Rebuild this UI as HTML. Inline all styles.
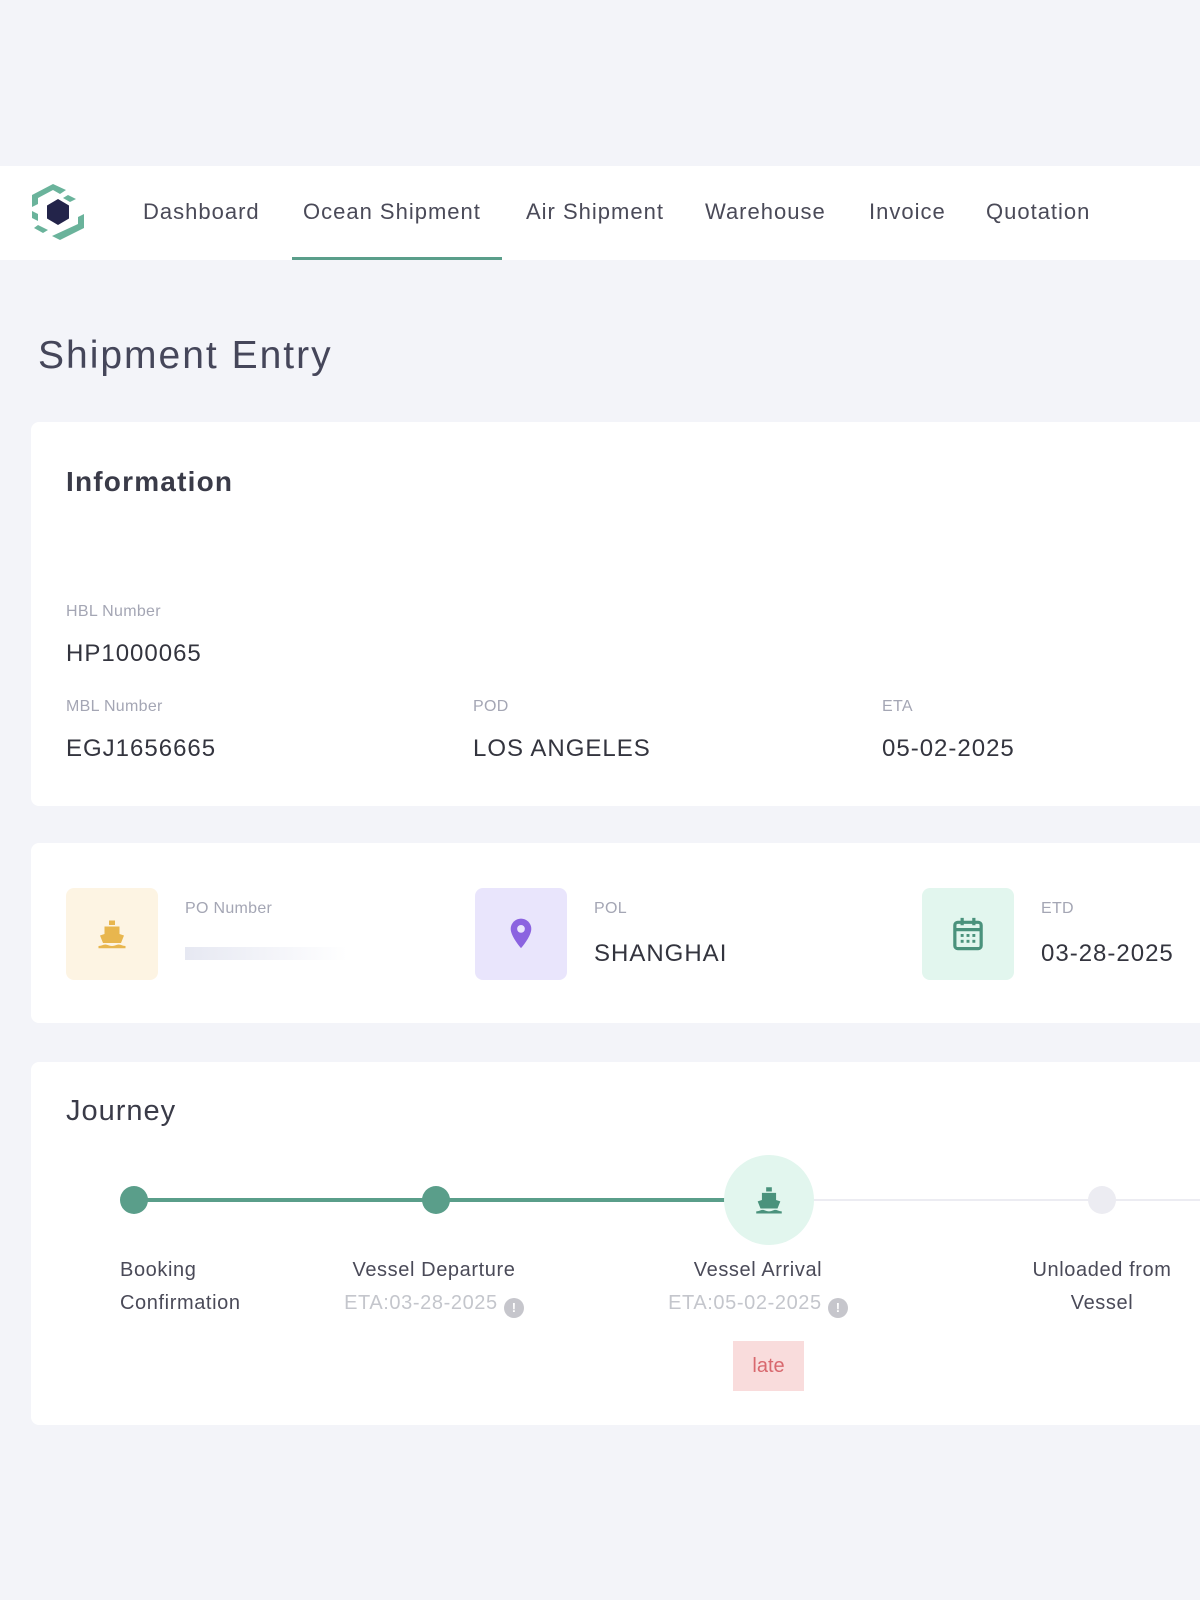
<!DOCTYPE html><html><head><meta charset="utf-8"><style>
*{margin:0;padding:0;box-sizing:border-box}
body{width:1200px;height:1600px;background:#f3f4f9;font-family:"Liberation Sans",sans-serif;position:relative;overflow:hidden;color:#3a3a48}
.a{position:absolute;white-space:nowrap}
.nav{position:absolute;left:0;top:166px;width:1200px;height:94px;background:#fff}
.ni{position:absolute;top:199px;font-size:22px;color:#4a4a58;letter-spacing:1px}
.card{position:absolute;left:31px;width:1200px;background:#fff;border-radius:8px}
.lb{position:absolute;font-size:16px;color:#a4a6b4;white-space:nowrap;letter-spacing:.3px}
.vl{position:absolute;font-size:24px;color:#33343e;white-space:nowrap;letter-spacing:1px}
.ib{position:absolute;top:888px;width:92px;height:92px;border-radius:8px}
.jl{position:absolute;font-size:20px;color:#4a4a58;text-align:center;line-height:33px;white-space:nowrap;letter-spacing:.6px}
.eta{color:#c4c6cc}
.ic{display:inline-block;width:20px;height:20px;border-radius:50%;background:#c6c6cc;vertical-align:-3px;color:#fff;font-size:13px;line-height:20px;text-align:center;font-weight:bold;letter-spacing:0}
</style></head><body>
<div class="nav"></div>
<svg class="a" style="left:26px;top:180px" width="64" height="64" viewBox="0 0 64 64">
<polygon points="32,19 43,25.5 43,38.5 32,45 21,38.5 21,25.5" fill="#23244a"/>
<polygon points="27,4 40,10 34,14 27,10 12,18 12,24 6,27 6,15" fill="#6ab39b"/>
<polygon points="42,15 50,19 44,22 37,18" fill="#6ab39b"/>
<polygon points="58,34 58,48 34,60 26,56 52,44 52,37" fill="#6ab39b"/>
<polygon points="6,31 12,34 12,41 6,38" fill="#6ab39b"/>
<polygon points="12,45 22,50 17,53 8,48" fill="#6ab39b"/>
</svg>
<div class="ni" style="left:143px">Dashboard</div>
<div class="ni" style="left:303px">Ocean Shipment</div>
<div class="ni" style="left:526px">Air Shipment</div>
<div class="ni" style="left:705px">Warehouse</div>
<div class="ni" style="left:869px">Invoice</div>
<div class="ni" style="left:986px">Quotation</div>
<div class="a" style="left:292px;top:257px;width:210px;height:3px;background:#5a9e8a"></div>
<div class="a" style="left:38px;top:334px;font-size:39px;color:#45465a;letter-spacing:2px">Shipment Entry</div>

<div class="card" style="top:422px;height:384px"></div>
<div class="a" style="left:66px;top:466px;font-size:28px;font-weight:bold;color:#3a3b48;letter-spacing:1.2px">Information</div>
<div class="lb" style="left:66px;top:603px">HBL Number</div>
<div class="vl" style="left:66px;top:640px">HP1000065</div>
<div class="lb" style="left:66px;top:698px">MBL Number</div>
<div class="vl" style="left:66px;top:735px">EGJ1656665</div>
<div class="lb" style="left:473px;top:698px">POD</div>
<div class="vl" style="left:473px;top:735px">LOS ANGELES</div>
<div class="lb" style="left:882px;top:698px">ETA</div>
<div class="vl" style="left:882px;top:735px">05-02-2025</div>

<div class="card" style="top:843px;height:180px"></div>
<div class="ib" style="left:66px;background:#fdf4e3"></div>
<svg class="a" style="left:94px;top:916px" width="36" height="36" viewBox="0 0 24 24" fill="#e8b64e"><rect x="10" y="3" width="4" height="3"/><path d="M7 7h10v5l3 1-2 5H6l-2-5 3-1z"/><path d="M3 20c2 0 3-1 4.5-1s2.5 1 4.5 1 3-1 4.5-1 2.5 1 4.5 1v1.5H3z"/></svg>
<div class="lb" style="left:185px;top:900px">PO Number</div>
<div class="a" style="left:185px;top:947px;width:162px;height:13px;background:linear-gradient(90deg,#e6e8f2,#fff)"></div>
<div class="ib" style="left:475px;background:#e9e5fc"></div>
<svg class="a" style="left:505px;top:916px" width="32" height="36" viewBox="0 0 24 28"><path d="M12 2a8 8 0 0 0-8 8c0 6 8 15 8 15s8-9 8-15a8 8 0 0 0-8-8z" fill="#8b63e0"/><circle cx="12" cy="10" r="3" fill="#e9e5fc"/></svg>
<div class="lb" style="left:594px;top:900px">POL</div>
<div class="vl" style="left:594px;top:940px">SHANGHAI</div>
<div class="ib" style="left:922px;background:#e2f6ee"></div>
<svg class="a" style="left:950px;top:915px" width="36" height="38" viewBox="0 0 24 26" fill="none" stroke="#4a927c" stroke-width="2.2"><rect x="3" y="5" width="18" height="18" rx="2"/><path d="M3 10h18M8 2v5M16 2v5"/><g fill="#4a927c" stroke="none"><rect x="7" y="13" width="2" height="2"/><rect x="11" y="13" width="2" height="2"/><rect x="15" y="13" width="2" height="2"/><rect x="7" y="17" width="2" height="2"/><rect x="11" y="17" width="2" height="2"/><rect x="15" y="17" width="2" height="2"/></g></svg>
<div class="lb" style="left:1041px;top:900px">ETD</div>
<div class="vl" style="left:1041px;top:940px">03-28-2025</div>

<div class="card" style="top:1062px;height:363px"></div>
<div class="a" style="left:66px;top:1095px;font-size:29px;color:#3a3b48;letter-spacing:1px">Journey</div>
<div class="a" style="left:134px;top:1198px;width:600px;height:4px;background:#5a9e8a"></div>
<div class="a" style="left:810px;top:1199px;width:400px;height:2px;background:#ececf2"></div>
<div class="a" style="left:120px;top:1186px;width:28px;height:28px;border-radius:50%;background:#5a9e8a"></div>
<div class="a" style="left:422px;top:1186px;width:28px;height:28px;border-radius:50%;background:#5a9e8a"></div>
<div class="a" style="left:1088px;top:1186px;width:28px;height:28px;border-radius:50%;background:#ececf2"></div>
<div class="a" style="left:724px;top:1155px;width:90px;height:90px;border-radius:50%;background:#e2f6ee"></div>
<svg class="a" style="left:751px;top:1183px" width="36" height="34" viewBox="0 0 24 24" fill="#4a927c"><rect x="10" y="3" width="4" height="3"/><path d="M7 7h10v5l3 1-2 5H6l-2-5 3-1z"/><path d="M3 20c2 0 3-1 4.5-1s2.5 1 4.5 1 3-1 4.5-1 2.5 1 4.5 1v1.5H3z"/></svg>
<div class="jl" style="left:120px;top:1254px;text-align:left">Booking<br>Confirmation</div>
<div class="jl" style="left:334px;width:200px;top:1254px">Vessel Departure<br><span class="eta">ETA:03-28-2025</span> <span class="ic">!</span></div>
<div class="jl" style="left:658px;width:200px;top:1254px">Vessel Arrival<br><span class="eta">ETA:05-02-2025</span> <span class="ic">!</span></div>
<div class="jl" style="left:1002px;width:200px;top:1254px">Unloaded from<br>Vessel</div>
<div class="a" style="left:733px;top:1341px;width:71px;height:50px;background:#f9dcdc;color:#d8686e;font-size:20px;text-align:center;line-height:50px">late</div>
</body></html>
